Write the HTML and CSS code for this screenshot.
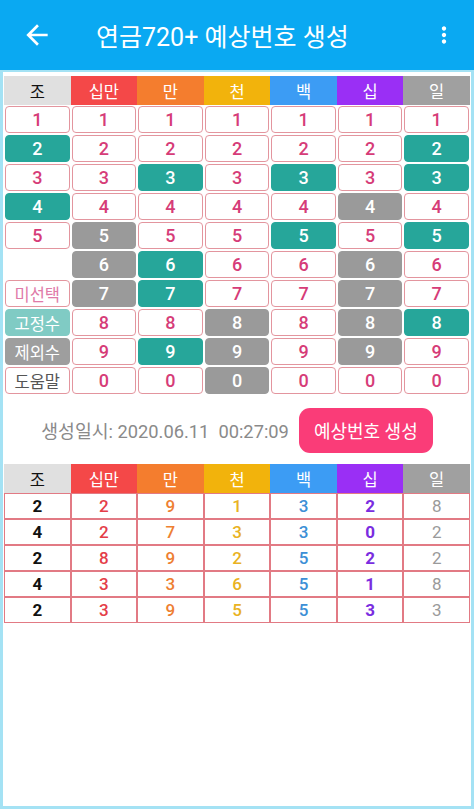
FILE: index.html
```html
<!DOCTYPE html>
<html lang="ko">
<head>
<meta charset="utf-8">
<link rel="stylesheet" href="styles.css">
</head>
<body>
<header class="appbar">
  <svg class="back" viewBox="0 0 24 24"><path d="M20 11H7.83l5.59-5.59L12 4l-8 8 8 8 1.41-1.41L7.83 13H20v-2z" fill="#fff"/></svg>
  <h1 class="title">연금720+ 예상번호 생성</h1>
  <svg class="more" viewBox="0 0 24 24"><path d="M12 8c1.1 0 2-.9 2-2s-.9-2-2-2-2 .9-2 2 .9 2 2 2zm0 2c-1.1 0-2 .9-2 2s.9 2 2 2 2-.9 2-2-.9-2-2-2zm0 6c-1.1 0-2 .9-2 2s.9 2 2 2 2-.9 2-2-.9-2-2-2z" fill="#fff"/></svg>
</header>
<main class="frame">
  <div class="grid">
    <div class="h h0">조</div><div class="h h1">십만</div><div class="h h2">만</div><div class="h h3">천</div><div class="h h4">백</div><div class="h h5">십</div><div class="h h6">일</div>

    <div class="c">1</div><div class="c">1</div><div class="c">1</div><div class="c">1</div><div class="c">1</div><div class="c">1</div><div class="c">1</div>
    <div class="c t">2</div><div class="c">2</div><div class="c">2</div><div class="c">2</div><div class="c">2</div><div class="c">2</div><div class="c t">2</div>
    <div class="c">3</div><div class="c">3</div><div class="c t">3</div><div class="c">3</div><div class="c t">3</div><div class="c">3</div><div class="c t">3</div>
    <div class="c t">4</div><div class="c">4</div><div class="c">4</div><div class="c">4</div><div class="c">4</div><div class="c g">4</div><div class="c">4</div>
    <div class="c">5</div><div class="c g">5</div><div class="c">5</div><div class="c">5</div><div class="c t">5</div><div class="c">5</div><div class="c t">5</div>
    <div class="blank"></div><div class="c g">6</div><div class="c t">6</div><div class="c">6</div><div class="c">6</div><div class="c g">6</div><div class="c">6</div>
    <div class="c lab l-none">미선택</div><div class="c g">7</div><div class="c t">7</div><div class="c">7</div><div class="c">7</div><div class="c g">7</div><div class="c">7</div>
    <div class="c lab l-fix">고정수</div><div class="c">8</div><div class="c">8</div><div class="c g">8</div><div class="c">8</div><div class="c g">8</div><div class="c t">8</div>
    <div class="c lab l-ex">제외수</div><div class="c">9</div><div class="c t">9</div><div class="c g">9</div><div class="c">9</div><div class="c g">9</div><div class="c">9</div>
    <div class="c lab l-help">도움말</div><div class="c">0</div><div class="c">0</div><div class="c g">0</div><div class="c">0</div><div class="c">0</div><div class="c">0</div>
  </div>

  <div class="gen-row">
    <span class="gen-date">생성일시: 2020.06.11&nbsp; 00:27:09</span>
    <button class="gen-btn">예상번호 생성</button>
  </div>

  <div class="result">
    <div class="h h0">조</div><div class="h h1">십만</div><div class="h h2">만</div><div class="h h3">천</div><div class="h h4">백</div><div class="h h5">십</div><div class="h h6">일</div>

    <div class="r r0">2</div><div class="r r1">2</div><div class="r r2">9</div><div class="r r3">1</div><div class="r r4">3</div><div class="r r5">2</div><div class="r r6">8</div>
    <div class="r r0">4</div><div class="r r1">2</div><div class="r r2">7</div><div class="r r3">3</div><div class="r r4">3</div><div class="r r5">0</div><div class="r r6">2</div>
    <div class="r r0">2</div><div class="r r1">8</div><div class="r r2">9</div><div class="r r3">2</div><div class="r r4">5</div><div class="r r5">2</div><div class="r r6">2</div>
    <div class="r r0">4</div><div class="r r1">3</div><div class="r r2">3</div><div class="r r3">6</div><div class="r r4">5</div><div class="r r5">1</div><div class="r r6">8</div>
    <div class="r r0">2</div><div class="r r1">3</div><div class="r r2">9</div><div class="r r3">5</div><div class="r r4">5</div><div class="r r5">3</div><div class="r r6">3</div>
  </div>
</main>
</body>
</html>
```
FILE: styles.css
```css
* { box-sizing: border-box; }
html, body { margin: 0; padding: 0; }
body {
  width: 474px;
  height: 809px;
  overflow: hidden;
  background: #fff;
  font-family: Roboto, "Noto Sans CJK KR", sans-serif;
}
.appbar {
  height: 70px;
  background: #0aa9f2;
  display: flex;
  align-items: center;
}
.back {
  width: 32px;
  height: 32px;
  margin-left: 21px;
  flex: none;
}
.title {
  margin: 0 0 0 43px;
  color: #fff;
  font-size: 25px;
  font-weight: 400;
  letter-spacing: 0;
  white-space: nowrap;
}
.more {
  width: 26px;
  height: 26px;
  margin-left: auto;
  margin-right: 17px;
  flex: none;
}
.frame {
  height: 739px;
  border: 3px solid #a4e2f4;
  border-top-width: 2px;
  padding: 4px 1px 0;
  background: #fff;
}
.grid, .result {
  display: grid;
  grid-template-columns: repeat(7, 1fr);
}
.grid { grid-auto-rows: 29px; }
.result { grid-template-rows: 29px; grid-auto-rows: 26px; }
.h {
  display: flex;
  align-items: center;
  justify-content: center;
  color: #fff;
  font-size: 16.5px;
}
.h0 { background: #e0e0e0; color: #111; }
.h1 { background: #f44848; }
.h2 { background: #f47d2e; }
.h3 { background: #f2b30c; }
.h4 { background: #3c9cf4; }
.h5 { background: #9a2ff5; }
.h6 { background: #a0a0a0; }
.c {
  margin: 1px;
  border: 1px solid #e3959e;
  border-radius: 4px;
  background: #fff;
  color: #d63c78;
  display: flex;
  align-items: center;
  justify-content: center;
  font-size: 18px;
  font-weight: 500;
}
.c.t { background: #26a69a; border-color: #26a69a; color: #fff; }
.c.g { background: #9a9a9a; border-color: #9a9a9a; color: #fff; }
.lab { font-size: 16.5px; font-weight: 400; }
.l-none { color: #e07aa8; }
.l-fix { background: #80cbc4; border-color: #80cbc4; color: #fff; }
.l-ex { background: #9e9e9e; border-color: #9e9e9e; color: #fff; }
.l-help { color: #555; }
.gen-row {
  height: 69px;
  display: flex;
  align-items: center;
  justify-content: center;
  gap: 10px;
  padding-top: 1px;
}
.gen-date {
  color: #8a8a8a;
  font-size: 18.3px;
  white-space: nowrap;
}
.gen-btn {
  height: 45px;
  padding: 0 15px;
  border: none;
  border-radius: 11px;
  background: #fa3c78;
  color: #fff;
  font-family: inherit;
  font-size: 18px;
}
.r {
  border: 1px solid #e27a84;
  display: flex;
  align-items: center;
  justify-content: center;
  font-size: 17px;
  font-weight: 500;
}
.r0 { color: #111; font-weight: 700; }
.r1 { color: #e43d48; }
.r2 { color: #ee8032; }
.r3 { color: #e9b222; }
.r4 { color: #3c8fd6; }
.r5 { color: #7a2de0; font-weight: 700; }
.r6 { color: #9a9a9a; font-weight: 400; }
```
